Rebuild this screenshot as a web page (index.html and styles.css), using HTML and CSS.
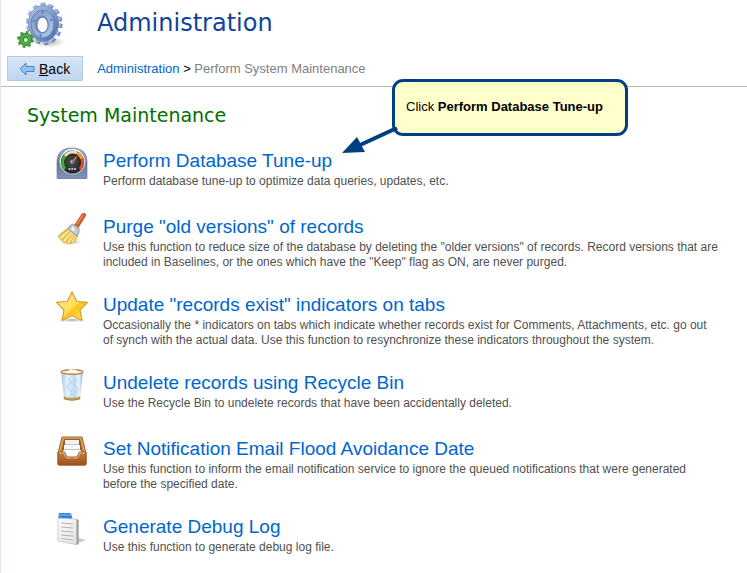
FILE: index.html
```
<!DOCTYPE html>
<html lang="en">
<head>
    <meta charset="UTF-8">
    <meta name="viewport" content="width=device-width, initial-scale=1.0">
    <title>Administration - Perform System Maintenance</title>
    <link rel="stylesheet" href="styles.css">
</head>
<body>
    <header class="page-header">
        <div class="title-row">
            <svg class="gears" viewBox="0 0 48 50" aria-hidden="true">
                <defs>
                    <linearGradient id="gearBlue" x1="0" y1="0" x2="1" y2="1">
                        <stop offset="0" stop-color="#b9cbea"/>
                        <stop offset="0.5" stop-color="#7f9bcd"/>
                        <stop offset="1" stop-color="#4a659f"/>
                    </linearGradient>
                    <linearGradient id="gearFace" x1="0" y1="0" x2="1" y2="1">
                        <stop offset="0" stop-color="#7d98c8"/>
                        <stop offset="1" stop-color="#b4c8e8"/>
                    </linearGradient>
                    <radialGradient id="gearGreen">
                        <stop offset="0" stop-color="#8fd47f"/>
                        <stop offset="1" stop-color="#3f9a38"/>
                    </radialGradient>
                    <radialGradient id="shade">
                        <stop offset="0" stop-color="#777" stop-opacity="0.6"/>
                        <stop offset="1" stop-color="#999" stop-opacity="0"/>
                    </radialGradient>
                </defs>
                <ellipse cx="32" cy="42" rx="16" ry="6" fill="url(#shade)"/>
                <ellipse cx="27.500" cy="24" rx="15.500" ry="18.500" fill="none" stroke="#6d86b9" stroke-width="5" stroke-dasharray="4 3.670"/>
                <ellipse cx="26.500" cy="23" rx="15.500" ry="18.500" fill="none" stroke="#a3b8de" stroke-width="4" stroke-dasharray="4 3.670"/>
                <ellipse cx="26.500" cy="23.500" rx="15" ry="18" fill="url(#gearBlue)" stroke="#7a93c4"/>
                <ellipse cx="25.500" cy="24" rx="11.500" ry="14" fill="url(#gearFace)" stroke="#6681b7"/>
                <ellipse cx="25" cy="24.500" rx="7" ry="9" fill="#6c86b8"/>
                <ellipse cx="25.500" cy="25" rx="5" ry="7.200" fill="#fff"/>
                <g fill="#6280b5"><circle cx="25.500" cy="12.500" r="1.200"/><circle cx="34" cy="20" r="1.200"/><circle cx="17" cy="21" r="1.200"/><circle cx="23.500" cy="35.500" r="1.200"/></g>
                <circle cx="8.500" cy="39.500" r="7" fill="none" stroke="#4a9f43" stroke-width="3" stroke-dasharray="2.800 2.700"/>
                <circle cx="8.500" cy="39.500" r="6.200" fill="url(#gearGreen)" stroke="#3c8e36"/>
                <circle cx="8.500" cy="39.500" r="3.200" fill="#3a8c35"/>
                <circle cx="8.800" cy="40" r="1.900" fill="#d5f0cc"/>
            </svg>
            <h1>Administration</h1>
        </div>
        <div class="nav-row">
            <button type="button" class="back-btn" accesskey="b">
                <svg class="back-arrow" viewBox="0 0 16 14" aria-hidden="true">
                    <path d="M1 7 7 1V4.500H15V9.500H7V13Z" fill="#8ec2f8" stroke="#5481b8"/>
                </svg>
                <span><u>B</u>ack</span>
            </button>
            <nav class="breadcrumb">
                <a href="#">Administration</a> &gt; <span class="current">Perform System Maintenance</span>
            </nav>
        </div>
    </header>

    <main class="content">
        <h2>System Maintenance</h2>

        <div class="item">
            <svg class="icon" viewBox="0 0 32 32" aria-hidden="true">
                <defs>
                    <linearGradient id="gaugeBody" x1="0" y1="0" x2="0" y2="1">
                        <stop offset="0" stop-color="#a4b0c4"/>
                        <stop offset="0.5" stop-color="#64779a"/>
                        <stop offset="1" stop-color="#8094b7"/>
                    </linearGradient>
                    <linearGradient id="gaugeRim" x1="0" y1="0" x2="0" y2="1">
                        <stop offset="0" stop-color="#fff"/>
                        <stop offset="1" stop-color="#aeb8c8"/>
                    </linearGradient>
                </defs>
                <path d="M1 31V15C1 5 7 1 16 1S31 5 31 15V31Q31 32 30 32H2Q1 32 1 31Z" fill="url(#gaugeBody)" stroke="#60718f" stroke-width="0.600"/>
                <circle cx="16.500" cy="15" r="12.200" fill="#292c2e" stroke="url(#gaugeRim)" stroke-width="1.400"/>
                <path d="M9 22A10 10 0 0 1 9 9" fill="none" stroke="#35b52c" stroke-width="3"/>
                <path d="M9 9A10 10 0 0 1 21 6" fill="none" stroke="#e8e2bc" stroke-width="3"/>
                <path d="M21 6A10 10 0 0 1 26 12" fill="none" stroke="#ef9b3e" stroke-width="3"/>
                <path d="M26 12A10 10 0 0 1 24 22" fill="none" stroke="#e64b20" stroke-width="3"/>
                <circle cx="16" cy="15" r="6.500" fill="#3c3f41"/>
                <path d="M15 15 21 9 17 16Z" fill="#f26a2d" stroke="#f26a2d"/>
                <circle cx="16" cy="15" r="2.200" fill="#777b7f"/>
                <circle cx="15.500" cy="14.500" r="0.800" fill="#ddd"/>
                <path d="M12.500 22H20" stroke="#f4f4f4" stroke-width="1.600" stroke-dasharray="1.800 1"/>
            </svg>
            <div class="item-text">
                <h3><a href="#">Perform Database Tune-up</a></h3>
                <p>Perform database tune-up to optimize data queries, updates, etc.</p>
            </div>
        </div>

        <div class="item">
            <svg class="icon" viewBox="0 0 32 32" aria-hidden="true">
                <ellipse cx="15" cy="29" rx="11" ry="3" fill="url(#shade)"/>
                <path d="M26 1Q29-1 30 2L22 15 18 13Z" fill="#d8602f" stroke="#a94320" stroke-width="0.700"/>
                <path d="M27 2 21 11" stroke="#f6a36e" stroke-width="1"/>
                <path d="M13 14Q8 18 2 23 6 30 13 31 20 30 22 22Z" fill="#edcf67" stroke="#cda73c" stroke-width="0.700"/>
                <path d="M14 16 5 25M16 18 8 28M18 20 12 30M20 21 16 29" stroke="#fff2ad" stroke-width="1.200"/>
                <path d="M12 17 4 22M15 18 6 27M18 21 10 29M20 22 14 30" stroke="#b98e2b" stroke-width="0.500"/>
                <path d="M17 11 23 15Q24 20 21 23L12 16Q13 12 17 11Z" fill="#c6c9cf" stroke="#84878e" stroke-width="0.700"/>
                <path d="M17 13 15 17 19 18Z" fill="#fff"/>
            </svg>
            <div class="item-text">
                <h3><a href="#">Purge "old versions" of records</a></h3>
                <p>Use this function to reduce size of the database by deleting the "older versions" of records. Record versions that are included in Baselines, or the ones which have the "Keep" flag as ON, are never purged.</p>
            </div>
        </div>

        <div class="item">
            <svg class="icon" viewBox="0 0 32 32" aria-hidden="true">
                <defs>
                    <linearGradient id="starGold" x1="0" y1="0" x2="1" y2="1">
                        <stop offset="0" stop-color="#fff0a0"/>
                        <stop offset="0.540" stop-color="#ffdc59"/>
                        <stop offset="0.560" stop-color="#fbc51d"/>
                        <stop offset="1" stop-color="#ffe364"/>
                    </linearGradient>
                </defs>
                <ellipse cx="16" cy="29" rx="14" ry="2.500" fill="url(#shade)"/>
                <path d="M16 1 20.800 10.500 31.500 11.300 24 19.200 26 29.500 16 24.500 6 29.500 8 19.200 0.500 11.300 11.200 10.500Z" fill="url(#starGold)" stroke="#dc9b23" stroke-width="1.200" stroke-linejoin="round"/>
            </svg>
            <div class="item-text">
                <h3><a href="#">Update "records exist" indicators on tabs</a></h3>
                <p>Occasionally the * indicators on tabs which indicate whether records exist for Comments, Attachments, etc. go out of synch with the actual data. Use this function to resynchronize these indicators throughout the system.</p>
            </div>
        </div>

        <div class="item">
            <svg class="icon" viewBox="0 0 32 32" aria-hidden="true">
                <defs>
                    <linearGradient id="glass" x1="0" y1="0" x2="1" y2="0">
                        <stop offset="0" stop-color="#9fc9e8"/>
                        <stop offset="0.300" stop-color="#e9f5fd"/>
                        <stop offset="0.600" stop-color="#bedbf0"/>
                        <stop offset="0.800" stop-color="#edf7fd"/>
                        <stop offset="1" stop-color="#8fb8d8"/>
                    </linearGradient>
                </defs>
                <path d="M5 3H27L24 29Q16 32 8 29Z" fill="url(#glass)"/>
                <path d="M12 9 15 13 11 18 16 23 14 28M21 9 18 15 22 20 19 27" fill="none" stroke="#b4d4eb" stroke-width="1.200"/>
                <ellipse cx="16" cy="3" rx="11" ry="2.300" fill="#e7edf0" stroke="#b38b38" stroke-width="1.400"/>
                <path d="M11 3.500 14 0 20 1 23 4Z" fill="#fff"/>
                <path d="M8 28Q16 31 24 28V30Q16 33 8 30Z" fill="#c79b3f" stroke="#8e6a28" stroke-width="0.500"/>
            </svg>
            <div class="item-text">
                <h3><a href="#">Undelete records using Recycle Bin</a></h3>
                <p>Use the Recycle Bin to undelete records that have been accidentally deleted.</p>
            </div>
        </div>

        <div class="item">
            <svg class="icon" viewBox="0 0 32 32" aria-hidden="true">
                <defs>
                    <linearGradient id="trayWood" x1="0" y1="0" x2="0" y2="1">
                        <stop offset="0" stop-color="#c77d3b"/>
                        <stop offset="1" stop-color="#9b5220"/>
                    </linearGradient>
                </defs>
                <path d="M6 2H26L30 18V29Q30 30 29 30H3Q2 30 2 29V18Z" fill="#d99a5c" stroke="#a9682f"/>
                <path d="M8 4H24L27 18H5Z" fill="#8a5a30"/>
                <path d="M9 5H23V9H9Z" fill="#f2f2f2"/>
                <path d="M8 10H24V14H8Z" fill="#fafafa"/>
                <path d="M7 15H25V23H7Z" fill="#fff"/>
                <path d="M9 9.500H23M8 14.500H24" stroke="#c4c4c4"/>
                <path d="M2 17H8.500L11 22H21L23.500 17H30V29Q30 30 29 30H3Q2 30 2 29Z" fill="url(#trayWood)" stroke="#9b5722"/>
                <path d="M3 18H8L10.500 23H21.500L24 18H29" fill="none" stroke="#efbd86"/>
            </svg>
            <div class="item-text">
                <h3><a href="#">Set Notification Email Flood Avoidance Date</a></h3>
                <p>Use this function to inform the email notification service to ignore the queued notifications that were generated before the specified date.</p>
            </div>
        </div>

        <div class="item">
            <svg class="icon" viewBox="0 0 32 32" aria-hidden="true">
                <defs>
                    <linearGradient id="paper" x1="0" y1="0" x2="1" y2="1">
                        <stop offset="0" stop-color="#fff"/>
                        <stop offset="1" stop-color="#dedede"/>
                    </linearGradient>
                </defs>
                <path d="M20 31 30 27 23 25Z" fill="#ccc"/>
                <path d="M3 0H14Q16 1 16 6H2Z" fill="#2e7fe0"/>
                <path d="M3 2H15" stroke="#82c0fa"/>
                <path d="M2 5 20 6 22 7V31.500L20 31.500 2 28Z" fill="url(#paper)" stroke="#b9b9b9" stroke-width="0.700"/>
                <path d="M20.500 6 22.500 7V31L20.500 31.500Z" fill="#999"/>
                <path d="M5 10 17 11M5 14 17 15M5 18 17 19M5 22 17 23M5 25.500 17 27" stroke="#b4b4b4"/>
            </svg>
            <div class="item-text">
                <h3><a href="#">Generate Debug Log</a></h3>
                <p>Use this function to generate debug log file.</p>
            </div>
        </div>
    </main>

    <!-- help callout on top of the page -->
    <div class="callout">
        Click <strong>Perform Database Tune-up</strong>
        <svg class="callout-arrow" viewBox="0 0 56 28" aria-hidden="true">
            <path d="M55 1 18 18" stroke="#003f80" stroke-width="4"/>
            <path d="M0 26 15 10 23 25Z" fill="#003f80"/>
        </svg>
    </div>
</body>
</html>
```

FILE: styles.css
```
* {
    margin: 0;
    padding: 0;
    box-sizing: border-box;
}

body {
    position: relative;
    min-height: 100vh;
    border-left: 1px solid #dde3f0;
    background: #fff;
    font-family: "Liberation Sans", Arial, sans-serif;
    font-size: 12px;
    color: #505050;
}

a {
    color: #0066cc;
    text-decoration: none;
}

h1, h2 {
    font-family: Verdana, "DejaVu Sans", sans-serif;
    font-weight: normal;
}

.page-header {
    padding: 0 6px 5px;
    border-bottom: 1px solid #bbb;
}

.title-row {
    display: flex;
    gap: 32px;
    height: 56px;
    padding-left: 10px;
}

.gears {
    width: 48px;
    height: 50px;
}

h1 {
    color: #114499;
    font-size: 24px;
    line-height: 46px;
}

.nav-row {
    display: flex;
    align-items: center;
    gap: 14px;
}

.back-btn {
    display: flex;
    align-items: center;
    gap: 4px;
    height: 25px;
    padding: 0 12px 0 11px;
    border: 1px solid #b3cae8;
    background: linear-gradient(#d8e6f7, #bfd5f0);
    font-family: inherit;
    font-size: 14px;
    color: #000;
    cursor: pointer;
}

.back-btn:hover {
    background: #d8e6f7;
}

.back-arrow {
    width: 16px;
    height: 14px;
}

.breadcrumb {
    font-size: 13px;
    color: #000;
}

.breadcrumb .current {
    color: #808080;
}

.content {
    padding: 15px 28px 0 26px;
}

h2 {
    margin-bottom: 19px;
    color: #007000;
    font-size: 19px;
    line-height: 26px;
}

.item {
    display: flex;
    gap: 15px;
    min-height: 45px;
    margin-bottom: 21px;
    padding-left: 29px;
}

.icon {
    flex: none;
    width: 32px;
    height: 32px;
}

h3 {
    font-size: 19px;
    font-weight: normal;
    line-height: 27px;
}

.item p {
    line-height: 15px;
}

.callout {
    position: absolute;
    top: 79px;
    left: 391px;
    padding: 15px 22px 17px 11px;
    border: 3px solid #003f80;
    border-radius: 11px;
    background: #ffffcc;
    font-size: 13px;
    line-height: 19px;
    white-space: nowrap;
    color: #000;
}

.callout-arrow {
    position: absolute;
    top: 45px;
    left: -53px;
    width: 56px;
    height: 28px;
}
```
